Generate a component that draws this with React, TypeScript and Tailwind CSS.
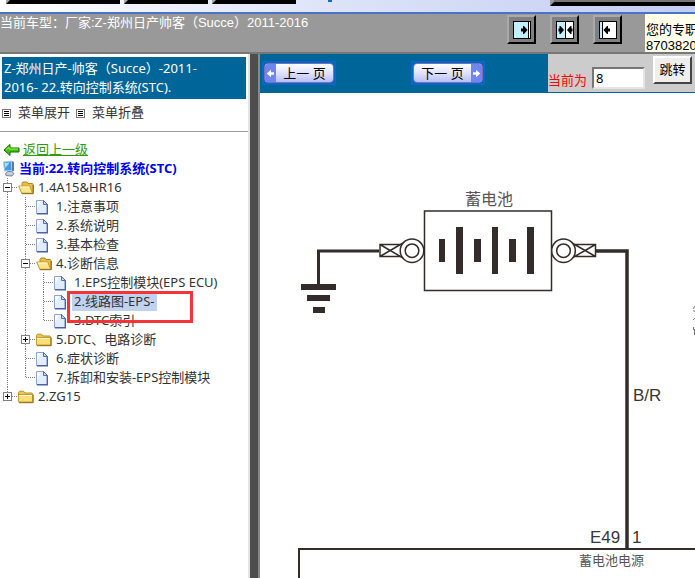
import type { ReactNode } from "react";

type IconKind = "open" | "closed" | "page";

interface TreeNode {
  label: string;
  icon: IconKind;
  selected?: boolean;
  children?: TreeNode[];
}

const TREE: TreeNode[] = [
  {
    label: "1.4A15&HR16",
    icon: "open",
    children: [
      { label: "1.注意事项", icon: "page" },
      { label: "2.系统说明", icon: "page" },
      { label: "3.基本检查", icon: "page" },
      {
        label: "4.诊断信息",
        icon: "open",
        children: [
          { label: "1.EPS控制模块(EPS ECU)", icon: "page" },
          { label: "2.线路图-EPS-", icon: "page", selected: true },
          { label: "3.DTC索引", icon: "page" },
        ],
      },
      { label: "5.DTC、电路诊断", icon: "closed" },
      { label: "6.症状诊断", icon: "page" },
      { label: "7.拆卸和安装-EPS控制模块", icon: "page" },
    ],
  },
  { label: "2.ZG15", icon: "closed" },
];

const BARS = [
  { x: 439, y: 239, w: 6, h: 23 },
  { x: 456, y: 227, w: 7, h: 47 },
  { x: 474, y: 239, w: 7, h: 23 },
  { x: 492, y: 227, w: 6, h: 47 },
  { x: 509, y: 239, w: 7, h: 23 },
  { x: 527, y: 227, w: 7, h: 47 },
];

function NodeIcon({ kind }: { kind: IconKind }) {
  if (kind === "page") {
    return (
      <svg width="18" height="18" viewBox="0 0 18 18" className="shrink-0">
        <path d="M.5 2.500h7l4 4v9H.5z" fill="#e2eeff" stroke="#8fa3d2" />
        <path d="M1 3h4l-4 8z" fill="#fff" />
        <path d="M11.300 6.500v9.200H1" fill="none" stroke="#4b62a8" strokeWidth="1.400" />
        <path d="M7.500 2.500v4h4z" fill="#c4d6f6" stroke="#566eae" />
      </svg>
    );
  }
  return (
    <svg width="18" height="18" viewBox="0 0 18 18" className="shrink-0">
      {kind === "open" ? (
        <>
          <path d="M4 14V4.500L5 3h4l1 1.500h4.500l.500 1V14z" fill="#e9be42" stroke="#b28722" />
          <path d="M.700 7h11l3 7.200H3.700z" fill="#fbe58b" stroke="#c49a2c" />
          <path d="M2 8h9.500" stroke="#fffbd8" />
          <path d="M3.700 14.700h11.600V6" fill="none" stroke="#8b6918" />
        </>
      ) : (
        <>
          <path d="M.500 13.500V4.500l1-1.300h4L7 5h7l.500.500V14z" fill="#edc64c" stroke="#b98f27" />
          <path d="M.500 6.500h14V14H.500z" fill="#fadf78" stroke="#c99f31" />
          <path d="M1 7.500h13" stroke="#fffbd0" />
          <path d="M1 14.700h14.200V6.500" fill="none" stroke="#8b6918" />
        </>
      )}
    </svg>
  );
}

// One 18px column of the dotted tree lines
function Guide({ line, branch, toggle }: { line: "full" | "half" | "none"; branch?: boolean; toggle?: "+" | "-" }) {
  return (
    <svg width="18" height="19" viewBox="0 0 18 19" className="shrink-0" shapeRendering="crispEdges">
      {line !== "none" && (
        <path d={line === "full" ? "M7.500 0v19" : "M7.500 0v10"} stroke="#808080" strokeDasharray="1 1" />
      )}
      {branch && <path d="M8 9.500h10" stroke="#808080" strokeDasharray="1 1" />}
      {toggle && (
        <>
          <rect x="3.500" y="5.500" width="8" height="8" fill="#fff" stroke="#808080" />
          <path d={toggle === "-" ? "M5 9.500h5" : "M5 9.500h5M7.500 7v5"} stroke="#000" />
        </>
      )}
    </svg>
  );
}

function Branch({ nodes, trail }: { nodes: TreeNode[]; trail: boolean[] }) {
  return (
    <ul>
      {nodes.map((node, i) => {
        const last = i === nodes.length - 1;
        const toggle = node.icon === "page" ? undefined : node.icon === "open" ? "-" : "+";
        return (
          <li key={node.label}>
            <div className="relative flex h-[19px] items-center">
              {trail.map((open, level) => (
                <Guide key={level} line={open ? "full" : "none"} />
              ))}
              <Guide line={last ? "half" : "full"} branch toggle={toggle} />
              <NodeIcon kind={node.icon} />
              <a href="#" className={node.selected ? "bg-[#c0d2ee] px-0.5" : "px-0.5"}>
                {node.label}
              </a>
              {node.selected && (
                <span className="pointer-events-none absolute -top-px left-[67px] z-10 h-8 w-[126px] border-3 border-[#f43438]" />
              )}
            </div>
            {node.children && <Branch nodes={node.children} trail={[...trail, !last]} />}
          </li>
        );
      })}
    </ul>
  );
}

function ListIcon() {
  return (
    <svg width="9" height="9" viewBox="0 0 9 9" shapeRendering="crispEdges">
      <rect x=".5" y=".5" width="8" height="8" fill="#fff" stroke="#777" />
      <path d="M2 2.500h5M2 4.500h5M2 6.500h5" stroke="#000" />
    </svg>
  );
}

function FrameButton({ label, children }: { label: string; children: ReactNode }) {
  return (
    <button
      aria-label={label}
      className="flex size-[29px] items-center justify-center border-2 border-t-[#aaa] border-r-black border-b-black border-l-[#aaa] bg-[#808080]"
    >
      <svg width="18" height="18" viewBox="0 0 18 18">
        {children}
      </svg>
    </button>
  );
}

function PageButton({ label, next }: { label: string; next?: boolean }) {
  const arrow = (
    <span className="flex w-[11px] items-center justify-center bg-[#7185ee]">
      <svg width="9" height="9" viewBox="0 0 9 9" className={next ? "" : "rotate-180"}>
        <path d="M1 3.200h3V.700l4.300 3.800L4 8.300V5.800H1z" fill="#fff" />
      </svg>
    </span>
  );
  return (
    <button className="border-2 border-[#0866cc]">
      <span className="flex h-5 w-[70px] overflow-hidden rounded-sm border border-[#7b70b8] bg-linear-to-b from-white via-[#e0e2fc] to-[#b9bff5] text-[13px] leading-[18px] text-black">
        {!next && arrow}
        <span className="flex-1 whitespace-nowrap">{label}</span>
        {next && arrow}
      </span>
    </button>
  );
}

function Diagram() {
  return (
    <svg
      width="435"
      height="485"
      viewBox="260 93 435 485"
      className="block font-['Liberation_Sans','Noto_Sans_CJK_SC',sans-serif]"
      fill="none"
      stroke="#332c2b"
    >
      <path d="M379 251H318.500V285" strokeWidth="3" />
      <path d="M596 251H627V549" strokeWidth="3.500" />
      <g fill="#332c2b" stroke="none">
        <rect x="301" y="284" width="35" height="6" />
        <rect x="307" y="295" width="23" height="6" />
        <rect x="313" y="307" width="12" height="6" />
        {BARS.map((b) => (
          <rect key={b.x} x={b.x} y={b.y} width={b.w} height={b.h} />
        ))}
      </g>
      <rect x="424.500" y="211" width="127" height="79.500" strokeWidth="1.500" />
      <g strokeWidth="1.500">
        <path d="M402 244.500H380V256.500H402M380 244.500L403 258M380 256.500L403 243" />
        <circle cx="412" cy="250.700" r="11.800" fill="#fff" />
        <circle cx="412" cy="250.700" r="6.800" />
        <path d="M574 244.500H595.500V256.500H574M595.500 244.500L572 258M595.500 256.500L572 243" />
        <circle cx="563.500" cy="250.700" r="11.800" fill="#fff" />
        <circle cx="563.500" cy="250.700" r="6.800" />
      </g>
      <path d="M299 578V549H695" strokeWidth="2" />
      <g fill="#3c3635" stroke="none" fontSize="17">
        <text x="633" y="401">B/R</text>
        <text x="590" y="543">E49</text>
        <text x="632" y="543">1</text>
      </g>
      <g fill="#5a5453" stroke="none" fontSize="13">
        <text x="465" y="205" fontSize="16">蓄电池</text>
        <text x="579" y="565">蓄电池电源</text>
      </g>
      {/* edge of the next block's caption */}
      <path d="M693 309l2-3M693 311h2M693 320l2-2M693.500 327v3M694.500 329v6" stroke="#777" />
    </svg>
  );
}

export default function App() {
  return (
    <div className="flex h-screen flex-col overflow-hidden bg-white font-['Noto_Sans','Noto_Sans_CJK_SC',sans-serif] text-[13px] text-[#333]">
      <div className="flex h-3.5 shrink-0 items-start border-b-2 border-[#4a72c8] bg-linear-to-r from-white via-[#dce2f8] to-[#c2cdf2] pl-1.5">
        <span className="w-[114px] border-b-4 border-l-4 border-b-black border-l-[#aaa]" />
        <span className="ml-1 w-[84px] border-b-4 border-l-4 border-b-black border-l-[#aaa]" />
        <span className="ml-1 w-[84px] border-b-4 border-l-4 border-b-black border-l-[#aaa]" />
        <span className="ml-8 h-0.5 w-1 bg-[#1669c9]" />
        <span className="ml-auto h-1.5 w-[145px] border-b-4 border-l-4 border-b-black border-l-[#999] bg-[#777]" />
      </div>

      <header className="flex h-10 shrink-0 border-b-2 border-[#777] bg-[#999] font-['Liberation_Sans','Noto_Sans_CJK_SC',sans-serif]">
        <p className="flex-1 whitespace-nowrap text-[13px] leading-[18px] text-white">
          当前车型：厂家:Z-郑州日产帅客（Succe）2011-2016
        </p>
        <div className="flex gap-3.5 pt-px pr-[23px]">
          <FrameButton label="展开左栏">
            <rect x=".5" y=".5" width="17" height="17" fill="#c0f0ff" stroke="#000" />
            <path d="M15 1h2v16h-2z" fill="#fff" />
            <path d="M15.500 1v16" stroke="#000" />
            <path d="M8 7.500h2V5h1l3.500 4-3.500 4h-1v-2.500H8z" fill="#000" />
          </FrameButton>
          <FrameButton label="恢复两栏">
            <rect x=".5" y=".5" width="17" height="17" fill="#fff" stroke="#000" />
            <path d="M1 1h8v16H1z" fill="#c0f0ff" />
            <path d="M9.500 1v16" stroke="#000" />
            <path d="M2.500 7.500h1V5h1L8 9l-3.500 4h-1v-2.500h-1zM16.500 7.500h-1V5h-1L11 9l3.500 4h1v-2.500h1z" fill="#000" />
          </FrameButton>
          <FrameButton label="收起左栏">
            <rect x=".5" y=".5" width="17" height="17" fill="#fff" stroke="#000" />
            <path d="M1 1h2v16H1z" fill="#c0f0ff" />
            <path d="M3.500 1v16" stroke="#000" />
            <path d="M11 7.500H9V5H8L4.500 9 8 13h1v-2.500h2z" fill="#000" />
          </FrameButton>
        </div>
        <div className="w-[50px] overflow-hidden bg-[#ffffea] pt-2 pl-px leading-4 whitespace-nowrap text-black">
          <p>您的专职</p>
          <p>87038205</p>
        </div>
      </header>

      <div className="flex min-h-0 flex-1">
        <aside className="w-[250px] shrink-0 overflow-hidden border-r-2 border-[#e4e4e4] whitespace-nowrap">
          <h1 className="mx-0.5 mt-[3px] h-[42px] bg-[#006699] px-0.5 pt-0.5 leading-[19px] text-white">
            Z-郑州日产-帅客（Succe）-2011-
            <br />
            2016- 22.转向控制系统(STC).
          </h1>
          <div className="flex h-[33px] items-center border-b border-[#999] pb-1 pl-0.5">
            <button className="flex items-center gap-[7px]">
              <ListIcon />
              菜单展开
            </button>
            <button className="ml-1.5 flex items-center gap-[7px]">
              <ListIcon />
              菜单折叠
            </button>
          </div>
          <div className="mt-2 flex h-[19px] items-center pl-[3px]">
            <svg width="20" height="16" viewBox="0 0 20 16">
              <path d="M1 8l6-5.500V6h9v4H7v3.500z" fill="#38c414" stroke="#126b08" />
              <path d="M3 7.500l3-2.500v2h9" fill="none" stroke="#b3ee3a" />
            </svg>
            <a href="#" className="text-[#2f9a0a] underline">
              返回上一级
            </a>
          </div>
          <div className="flex h-[19px] items-center pl-0.5 font-bold text-[#0000f0]">
            <svg width="17" height="18" viewBox="0 0 17 18">
              <path d="M1.500 2l8-1 .500 9.500-7.500.500z" fill="#3d9ce9" stroke="#b5c8dc" />
              <path d="M2.500 3l5-.500-4 5.500z" fill="#a6e0ff" />
              <path d="M10 1l2 1v9l-2 .500z" fill="#587ca9" />
              <path d="M5.500 11.500h4l2.500 2-2 2.500-6-.500-.500-1.500z" fill="#c3cddd" stroke="#7486a2" />
            </svg>
            当前:22.转向控制系统(STC)
          </div>
          <Branch nodes={TREE} trail={[]} />
        </aside>
        <div className="w-2.5 shrink-0 border-r-2 border-[#888] bg-[#4d4d4d]" />

        <main className="min-w-0 flex-1 overflow-hidden">
          <div className="flex h-[39px] bg-[#006699]">
            <div className="flex flex-1 items-start pt-[7px] pl-0.5">
              <PageButton label=" 上一 页" />
              <div className="w-[75px]" />
              <PageButton label="下一 页" next />
            </div>
            <form className="mb-px flex w-[147px] items-start bg-[#ccc] pt-0.5" onSubmit={(e) => e.preventDefault()}>
              <label htmlFor="page-no" className="pt-[15px] text-[13px] text-[#ff0000]">
                当前为
              </label>
              <input
                id="page-no"
                defaultValue="8"
                className="mt-[11px] ml-[5px] h-[22px] w-[53px] border-2 border-t-[#777] border-r-[#e5e5e5] border-b-[#e5e5e5] border-l-[#777] bg-white px-0.5 text-black"
              />
              <button className="ml-2 h-7 w-[39px] border-2 border-t-white border-r-[#444] border-b-[#444] border-l-white bg-[#eee] text-black">
                跳转
              </button>
            </form>
          </div>
          <Diagram />
        </main>
      </div>
    </div>
  );
}
